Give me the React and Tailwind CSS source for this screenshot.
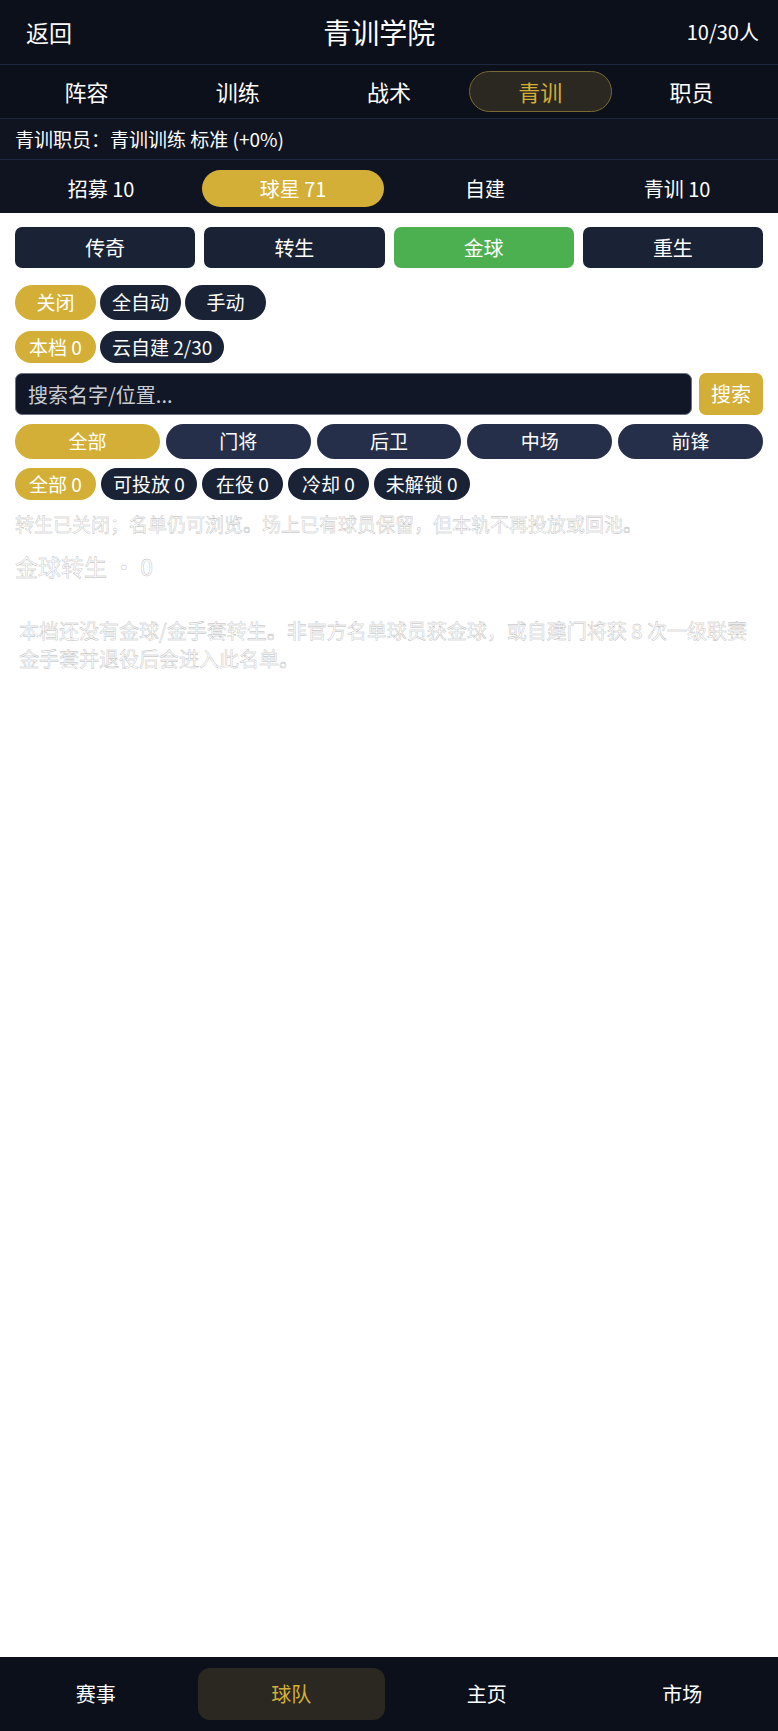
import { useState } from "react";

const mainTabs = ["阵容", "训练", "战术", "青训", "职员"];
const subTabs = ["招募 10", "球星 71", "自建", "青训 10"];
const segments = ["传奇", "转生", "金球", "重生"];
const positions = ["全部", "门将", "后卫", "中场", "前锋"];
const statuses = ["全部 0", "可投放 0", "在役 0", "冷却 0", "未解锁 0"];
const navItems = ["赛事", "球队", "主页", "市场"];

const Chip = ({ label, active, tall }) => (
  <span
    className={
      "min-w-[81px] px-[12px] flex items-center justify-center rounded-full text-[19px] text-white " +
      (tall ? "h-[35px] " : "h-[32px] ") +
      (active ? "bg-[#d4af37]" : "bg-[#1a2235]")
    }
  >
    {label}
  </span>
);

export default function App() {
  const [query, setQuery] = useState("");

  return (
    <div
      className="w-[778px] h-[1731px] flex flex-col bg-white"
      style={{ fontFamily: '"Noto Sans CJK SC", "Noto Sans", sans-serif' }}
    >
      {/* HEADER */}
      <div className="h-[65px] shrink-0 bg-[#0c101b] flex items-center justify-between pl-[26px] pr-[19px] border-b border-[#1e2740]">
        <span className="text-[23px] text-white">返回</span>
        <span className="text-[28px] text-white">青训学院</span>
        <span className="text-[20px] text-white">10/30人</span>
      </div>

      {/* MAIN TABS */}
      <div className="h-[54px] shrink-0 bg-[#0c101b] grid grid-cols-5 items-center px-[15px] gap-[8px] border-b border-[#1e2740]">
        {mainTabs.map((t) => (
          <div
            key={t}
            className={
              "h-[41px] flex items-center justify-center rounded-full text-[22px] " +
              (t === "青训"
                ? "bg-[#2b2821] border border-[#7a6a34] text-[#d4af37]"
                : "text-white")
            }
          >
            {t}
          </div>
        ))}
      </div>

      {/* INFO */}
      <div className="h-[41px] shrink-0 bg-[#0f1420] flex items-center px-[15px] text-[19px] text-white border-b border-[#1e2740]">
        青训职员：青训训练 标准 (+0%)
      </div>

      {/* SUB TABS */}
      <div className="h-[53px] shrink-0 bg-[#0f1420] grid grid-cols-4 items-center px-[10px] pt-[4px] gap-[10px]">
        {subTabs.map((t) => (
          <div
            key={t}
            className={
              "h-[37px] flex items-center justify-center rounded-full text-[20px] text-white " +
              (t === "球星 71" ? "bg-[#d4af37]" : "")
            }
          >
            {t}
          </div>
        ))}
      </div>

      {/* CONTENT */}
      <div className="flex-1 flex flex-col px-[15px] pt-[14px]">
        <div className="grid grid-cols-4 gap-[9px]">
          {segments.map((s) => (
            <div
              key={s}
              className={
                "h-[41px] flex items-center justify-center rounded-[7px] text-[20px] text-white " +
                (s === "金球" ? "bg-[#4caf50]" : "bg-[#1a2235]")
              }
            >
              {s}
            </div>
          ))}
        </div>

        <div className="flex gap-[4px] mt-[17px]">
          <Chip label="关闭" active tall />
          <Chip label="全自动" tall />
          <Chip label="手动" tall />
        </div>

        <div className="flex gap-[4px] mt-[11px]">
          <Chip label="本档 0" active />
          <Chip label="云自建 2/30" />
        </div>

        <div className="flex gap-[7px] mt-[10px]">
          <input
            value={query}
            onChange={(e) => setQuery(e.target.value)}
            placeholder="搜索名字/位置..."
            className="flex-1 h-[42px] rounded-[7px] bg-[#111726] border border-[#6b7280] px-[12px] text-[20px] text-white placeholder:text-[#c9ccd3] outline-none"
          />
          <button className="w-[64px] h-[42px] rounded-[7px] bg-[#d4af37] text-white text-[20px]">
            搜索
          </button>
        </div>

        <div className="grid grid-cols-5 gap-[6px] mt-[9px]">
          {positions.map((p) => (
            <div
              key={p}
              className={
                "h-[35px] flex items-center justify-center rounded-full text-[19px] text-white " +
                (p === "全部" ? "bg-[#d4af37]" : "bg-[#262f4a]")
              }
            >
              {p}
            </div>
          ))}
        </div>

        <div className="flex gap-[5px] mt-[9px]">
          {statuses.map((s, i) => (
            <Chip key={s} label={s} active={i === 0} />
          ))}
        </div>

        <p className="mt-[10px] text-[19px] text-white [-webkit-text-stroke:0.4px_#b8b8b8]">
          转生已关闭；名单仍可浏览。场上已有球员保留，但本轨不再投放或回池。
        </p>

        <h3 className="mt-[10px] text-[23px] text-white [-webkit-text-stroke:0.4px_#b8b8b8]">
          金球转生 · 0
        </h3>

        <p className="mt-[34px] px-[4px] text-[20px] leading-[28px] text-white [-webkit-text-stroke:0.4px_#b8b8b8]">
          本档还没有金球/金手套转生。非官方名单球员获金球，或自建门将获 8 次一级联赛金手套并退役后会进入此名单。
        </p>
      </div>

      {/* BOTTOM NAV */}
      <div className="h-[74px] shrink-0 bg-[#0c101b] grid grid-cols-4 items-center px-[2px] gap-[8px]">
        {navItems.map((n) => (
          <div
            key={n}
            className={
              "h-[52px] flex items-center justify-center rounded-[12px] text-[20px] " +
              (n === "球队" ? "bg-[#2b2821] text-[#d4af37]" : "text-white")
            }
          >
            {n}
          </div>
        ))}
      </div>
    </div>
  );
}
